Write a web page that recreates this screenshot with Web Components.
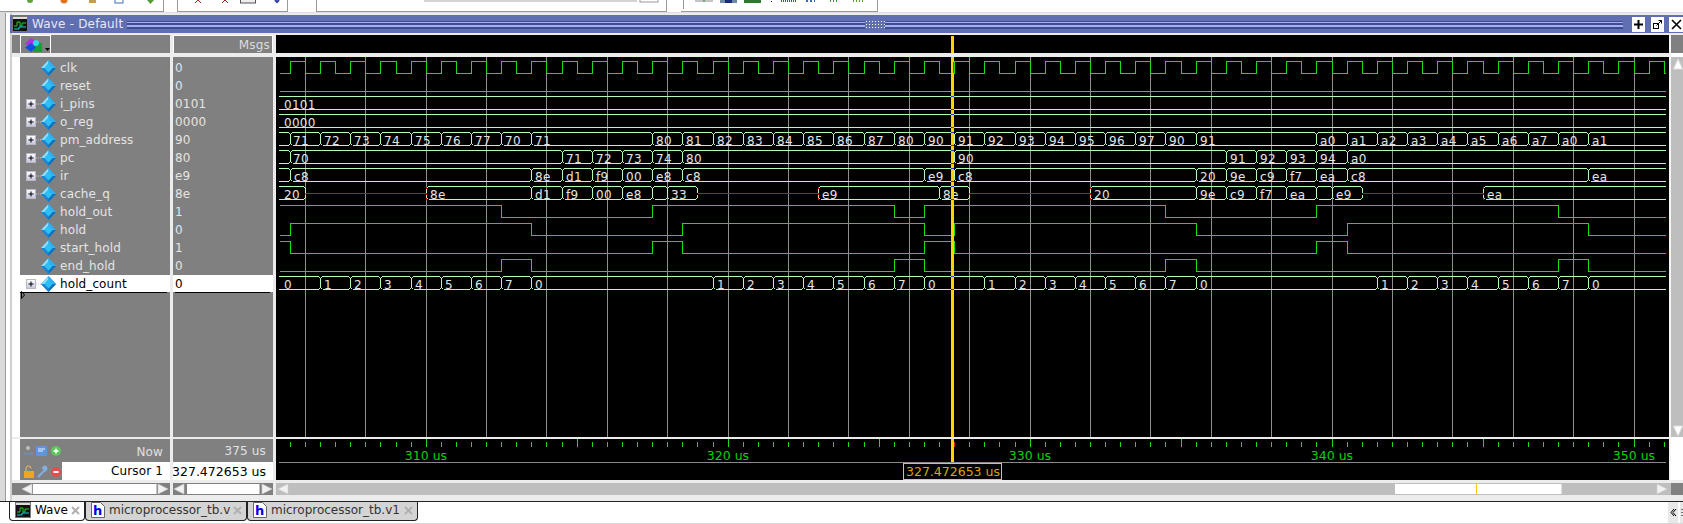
<!DOCTYPE html>
<html><head><meta charset="utf-8"><title>Wave</title>
<style>
html,body{margin:0;padding:0;width:1683px;height:524px;overflow:hidden;background:#fff;font:12px "DejaVu Sans",sans-serif}
</style></head><body>
<wave-app>
  <tool-strip></tool-strip>
  <wave-window>
    <title-bar slot="title">Wave - Default</title-bar>
    <name-head slot="namehead"></name-head>
    <value-head slot="valuehead">Msgs</value-head>
    <cursor-head slot="wavehead"></cursor-head>
    <signal-list slot="names">
      <signal-name>clk</signal-name>
      <signal-name>reset</signal-name>
      <signal-name expand>i_pins</signal-name>
      <signal-name expand>o_reg</signal-name>
      <signal-name expand>pm_address</signal-name>
      <signal-name expand>pc</signal-name>
      <signal-name expand>ir</signal-name>
      <signal-name expand>cache_q</signal-name>
      <signal-name>hold_out</signal-name>
      <signal-name>hold</signal-name>
      <signal-name>start_hold</signal-name>
      <signal-name>end_hold</signal-name>
      <signal-name expand selected>hold_count</signal-name>
    </signal-list>
    <value-list slot="values">
      <signal-value>0</signal-value>
      <signal-value>0</signal-value>
      <signal-value>0101</signal-value>
      <signal-value>0000</signal-value>
      <signal-value>90</signal-value>
      <signal-value>80</signal-value>
      <signal-value>e9</signal-value>
      <signal-value>8e</signal-value>
      <signal-value>1</signal-value>
      <signal-value>0</signal-value>
      <signal-value>1</signal-value>
      <signal-value>0</signal-value>
      <signal-value selected>0</signal-value>
    </value-list>
    <wave-body slot="waves"></wave-body>
    <v-scroll slot="vscroll"></v-scroll>
    <now-names slot="nownames"></now-names>
    <now-values slot="nowvalues"></now-values>
    <time-scale slot="scale"></time-scale>
    <h-scroll slot="s1" thumb="33,156.5" left="22" right="158" origin="12" bg="#808080"></h-scroll>
    <h-scroll slot="s2" thumb="187,259.5" left="174" right="262" origin="173" bg="#808080"></h-scroll>
    <h-scroll slot="s3" thumb="1395,1561.5" left="278" right="1657" origin="276" bg="#bebebe" mark="1476" tail="1671"></h-scroll>
  </wave-window>
  <tab-strip>
    <tab-item active icon="wave" w="76">Wave</tab-item>
    <tab-item icon="file" w="162">microprocessor_tb.v</tab-item>
    <tab-item icon="file" w="171">microprocessor_tb.v1</tab-item>
  </tab-strip>
</wave-app>
<script>
const X=k=>Math.round(425.7+15.0975*k);
const CUR=951;
function def(name,css,html,init){
  customElements.define(name,class extends HTMLElement{
    constructor(){super();this.attachShadow({mode:'open'});}
    connectedCallback(){
      const h=typeof html==='function'?html(this):html;
      this.shadowRoot.innerHTML='<style>'+css+'</style>'+h;
      if(init)init(this);
    }
  });
}
const wwaveIcon=`<svg width="16" height="16" viewBox="0 0 16 16"><rect x=".5" y=".5" width="15" height="15" fill="#111" stroke="#777"/><rect x="1" y="1" width="14" height="2" fill="#ddd"/><path d="M2 10h3V6h3v4h2V7h4" fill="none" stroke="#1fd11f"/><path d="M2 13h5v-2h7" fill="none" stroke="#19c8d8"/></svg>`;

def('wave-app',':host{display:flex;flex-direction:column;width:1683px;height:524px;overflow:hidden}','<slot></slot>');

def('tool-strip',`:host{display:flex;height:13px;flex:none;background:#fff;box-sizing:border-box;border-bottom:1px solid #dcdcdc}
.b{height:12px;box-sizing:border-box;border-right:1px solid #9a9a9a;border-bottom:1px solid #9a9a9a;background:#fff;flex:none;overflow:hidden;display:block}
svg{display:block}`,`
<svg class="b" style="width:164px" width="164" height="12">
 <circle cx="30" cy="0" r="3" fill="#63a03c"/><circle cx="64" cy="0" r="3.5" fill="#e8701c"/><rect x="89" y="-3" width="7" height="6" fill="#c89a50"/><rect x="115" y="-3" width="8" height="6" fill="#fff" stroke="#3a70c0"/><path d="M147 0h7l-3.500 4z" fill="#4ca02c"/></svg>
<svg class="b" style="width:111px;margin-left:13px;border-left:1px solid #9a9a9a" width="111" height="12">
 <path d="M17 3l3-3 3 3M44 3l3-3 3 3" stroke="#a02020" fill="none"/><rect x="62.500" y="-2" width="15" height="5" fill="#eee" stroke="#555"/><path d="M97 0l2 2 2-2" fill="none" stroke="#3040a0" stroke-width="2"/></svg>
<svg class="b" style="width:351px;margin-left:28px;border-left:1px solid #9a9a9a" width="351" height="12">
 <rect x="107" y="0" width="213" height="2" fill="#d4d4d4"/><rect x="323" y="-2" width="18" height="4" fill="#fff" stroke="#999"/></svg>
<svg class="b" style="width:197px;margin-left:14px" width="197" height="12">
 <path d="M2.500 0v9" stroke="#999"/>
 <path d="M14 1h18" stroke="#888"/><path d="M23 0v2" stroke="#2a8a2a"/><rect x="39" y="0" width="17" height="3" fill="#7088a8"/><rect x="44" y="0" width="7" height="3" fill="#1a2a80"/><rect x="63" y="0" width="17" height="3" fill="#2a7a2a"/>
 <rect x="90" y="1" width="1" height="1" fill="#222"/><path d="M100 1h16" stroke="#3a4ab0" stroke-dasharray="1 1" stroke-width="2"/><path d="M125 1h9" stroke="#3a6ab0" stroke-dasharray="2 2" stroke-width="2"/><path d="M149 1h8" stroke="#3a9a3a" stroke-dasharray="1 2" stroke-width="2"/><path d="M172 1h10" stroke="#5a9a3a" stroke-dasharray="1 2" stroke-width="2"/></svg>`);

def('wave-window',`:host{display:grid;flex:none;box-sizing:border-box;width:1683px;background:#ececec;
 padding-left:12px;padding-top:2px;
 grid-template-columns:158px 3px 100px 3px 1393px 14px;
 grid-template-rows:18px 2px 18px 4px 380px 2px 41px 3px 12px 6px;
 background-image:linear-gradient(90deg,#d9d9d9 0 5px,#9a9a9a 5px 6px,#fff 6px 10px,#cfcfcf 10px 12px,transparent 12px)}
::slotted([slot=title]){grid-column:1/-1;grid-row:1;margin-left:-2px}
::slotted([slot=namehead]){grid-column:1;grid-row:3}
::slotted([slot=valuehead]){grid-column:3;grid-row:3}
::slotted([slot=wavehead]){grid-column:5;grid-row:3}
::slotted([slot=names]){grid-column:1;grid-row:5}
::slotted([slot=values]){grid-column:3;grid-row:5}
::slotted([slot=waves]){grid-column:5;grid-row:5}
::slotted([slot=vscroll]){grid-column:6;grid-row:3/8}
::slotted([slot=nownames]){grid-column:1;grid-row:7}
::slotted([slot=nowvalues]){grid-column:3;grid-row:7}
::slotted([slot=scale]){grid-column:5;grid-row:7}
::slotted([slot=s1]){grid-column:1;grid-row:9}
::slotted([slot=s2]){grid-column:3;grid-row:9}
::slotted([slot=s3]){grid-column:5/7;grid-row:9}`,
`<slot name="title"></slot><slot name="namehead"></slot><slot name="valuehead"></slot><slot name="wavehead"></slot><slot name="names"></slot><slot name="values"></slot><slot name="waves"></slot><slot name="vscroll"></slot><slot name="nownames"></slot><slot name="nowvalues"></slot><slot name="scale"></slot><slot name="s1"></slot><slot name="s2"></slot><slot name="s3"></slot>`);

def('title-bar',`:host{display:flex;align-items:center;height:18px;background:#5f6fb1;color:#e6e8f6;font:12px "DejaVu Sans",sans-serif;letter-spacing:.18px;position:relative}
.ic{margin:0 4px 0 2px;flex:none;display:flex}
.t{flex:none;white-space:nowrap;width:95px}
.grip{flex:1;height:8px;margin-top:1px;background:linear-gradient(#3e4d92 0 1px,#a7aff0 1px 2px,#3e4d92 2px 4px,#a7aff0 4px 6px,#3e4d92 6px 8px);display:flex;justify-content:center;align-items:center}
.dots{width:20px;height:10px;background:#5f6fb1 radial-gradient(circle,#fff 0 .7px,transparent .8px) 0 0/3px 3px}
.btns{display:flex;flex:none;margin-right:0;margin-left:4px}
.btn{width:13px;height:15px;background:#fff;border:0;box-sizing:border-box;display:flex;align-items:center;justify-content:center;margin-left:5px}
.btn svg{display:block}`,
`<span class="ic">${wwaveIcon}</span><span class="t"><slot></slot></span><span class="grip"><span class="dots"></span></span>
<span class="btns"><span class="btn"><svg width="11" height="11"><path d="M5.500 1v9M1 5.500h9" stroke="#000" stroke-width="2"/></svg></span><span class="btn" style="margin-left:6px"><svg width="11" height="11"><rect x="1.500" y="4.500" width="5" height="5" fill="none" stroke="#000"/><path d="M4.500 6.500L9.500 1.500M6.500 1.500h3v3" fill="none" stroke="#000"/></svg></span><span class="btn" style="width:14px"><svg width="11" height="11"><path d="M1 1l9 9M10 1l-9 9" stroke="#000" stroke-width="1.600"/></svg></span></span>`);

def('name-head',`:host{display:block;background:#808080;border-left:8px solid #808080;box-sizing:border-box;height:18px}
.b{display:block;width:31px;height:18px;box-sizing:border-box;border:1px solid #fff;border-bottom:0}
svg{display:block}`,
`<span class="b"><svg width="29" height="17"><path d="M4 8l6-6 7 4-5 5z" fill="#b030e0"/><rect x="12" y="7" width="9" height="9" fill="#18a038"/><path d="M10 7l5 4.500-5 4.500-6-4.500z" fill="#1050e0"/><circle cx="15" cy="7" r="3" fill="#30d8f0"/><path d="M24 12h5l-2.500 3z" fill="#000"/></svg></span>`);

def('value-head',`:host{display:flex;justify-content:flex-end;align-items:center;background:#808080;height:18px;box-sizing:border-box;border:1px solid #fff;border-bottom:0;padding:0 2px 0 0;color:#dcdcdc;font:12px "DejaVu Sans",sans-serif;letter-spacing:.2px}`,'<slot></slot>');

def('cursor-head',`:host{display:block;background:#000;height:18px;position:relative}
i{position:absolute;left:${CUR-276}px;top:1px;bottom:0;width:3px;background:#ffd400}`,'<i></i>');

def('signal-list',`:host{display:block;background:#808080;border-left:8px solid #fff;box-sizing:border-box;height:380px;padding-top:1px;position:relative}
.ins{height:1px;background:#000;margin:0 3px 0 0}
svg{position:absolute;left:1px;top:234px}`,
`<slot></slot><div class="ins"></div><svg width="5" height="9"><path d="M.5.500l3 3.500-3 3.500z" fill="none" stroke="#000"/></svg>`);
def('value-list',`:host{display:block;background:#808080;height:380px;padding-top:1px;box-sizing:border-box}
.ins{height:1px;background:#000;margin:0 3px 0 2px}`,`<slot></slot><div class="ins"></div>`);

const diamond=`<svg width="15" height="16" viewBox="0 0 15 16" style="display:block"><path d="M7.500 0L15 8l-7.500 8L0 8z" fill="#1f8fd8"/><path d="M7.500 0L0 8l3.500 0 4-4.500z" fill="#8be0ff"/><path d="M7.500 0L15 8l-3.500 0-4-4.500z" fill="#35b0ee"/><path d="M0 8l7.500 8v-3.500L3.500 8z" fill="#1c86d2"/><path d="M15 8l-7.500 8v-3.500l4-4.500z" fill="#1270bc"/><path d="M7.500 3.500l4 4.500-4 4.500-4-4.500z" fill="#2cc0f8"/></svg>`;
const plus=`<svg width="15" height="16" viewBox="0 0 15 16" style="display:block"><defs><linearGradient id="g" x1="0" y1="0" x2="0" y2="1"><stop offset="0" stop-color="#fff"/><stop offset="1" stop-color="#c4c4dc"/></linearGradient></defs><rect x=".5" y="3.500" width="9" height="9" fill="url(#g)" stroke="#b8b8c8"/><path d="M2.500 8h5M5 5.500v5" stroke="#000" stroke-width="1"/><path d="M10 8h5" stroke="#c8c8c8" stroke-dasharray="1 1"/></svg>`;
def('signal-name',`:host{display:flex;align-items:center;height:18px;box-sizing:border-box;padding:2px 0 0 6px;color:#e4e4e4;font:12px "DejaVu Sans",sans-serif;letter-spacing:.1px;white-space:nowrap}
:host([selected]){color:#000;background:linear-gradient(#808080 0 1px,#fff 1px)}
.p{width:15px;height:16px;flex:none}
.d{flex:none;margin-right:4px}`,
e=>`<span class="p">${e.hasAttribute('expand')?plus:''}</span><span class="d">${diamond}</span><slot></slot>`);
def('signal-value',`:host{display:flex;align-items:center;height:18px;box-sizing:border-box;padding:2px 0 0 2px;color:#e4e4e4;font:12px "DejaVu Sans",sans-serif;letter-spacing:.2px}
:host([selected]){color:#000;background:linear-gradient(#808080 0 1px,#fff 1px)}`,'<slot></slot>');

/* ---------- waveforms ---------- */
function buildWaves(){
  const G='#14e014',B='#b4fbb4',R='#f00000',END=1666,ST=280;
  let grid='',g='',b='',r='',t='',blue='';
  for(let k=-8;k<=80;k+=4){const x=X(k);grid+=`M${x+.5} 57V437`;}
  const top=i=>58+18*i;
  const bit=(i,startHigh,edges)=>{
    const hi=top(i)+3.5,lo=top(i)+15.5;let lvl=startHigh;let d=`M${ST} ${lvl?hi:lo}`;
    edges.forEach(k=>{const x=X(k)+.5;d+=`H${x}`;lvl=!lvl;d+=`V${lvl?hi:lo}`;});
    d+=`H${END}`;g+=d;
  };
  const clkE=[];for(let k=-9;k<=82;k++)clkE.push(k);
  bit(0,false,clkE);
  bit(1,false,[]);
  bit(8,true,[5,15,31,33,49,59,75]);
  bit(9,false,[-9,7,17,33,35,51,61,77]);
  bit(10,true,[-9,15,17,33,35,59,61]);
  bit(11,false,[5,7,31,33,49,51,75,77]);
  const bus=(i,segs)=>{
    const T=top(i)+2.5,Bt=T+13,M=T+7;
    segs.forEach((s,n)=>{
      const first=n===0,last=n===segs.length-1;
      const x0=first?279:X(s[0]);const x1=last?END:X(segs[n+1][0]);
      const red=s[1]===null;
      if(red){r+=`M${x0+1} ${M}H${x1+1}`;}
      else{
        const a=first?x0:x0+2.5,c=last?x1:x1-1.5;
        b+=`M${a} ${T}H${c}M${a} ${Bt}H${c}`;
        if(s[1])t+=`<text x="${first?284:x0+4+(s[2]||0)}" y="${top(i)+15}">${s[1]}</text>`;
      }
      if(!first){
        const x=x0+.5,prevRed=segs[n-1][1]===null;
        if(!prevRed)b+=`M${x-2} ${T}L${x} ${T+2}V${prevRed?M:(red?M-1:Bt-2)}`+(red?`M${x-2} ${Bt}L${x} ${Bt-2}V${M+1}`:`L${x-2} ${Bt}`);
        if(!red){
          if(prevRed){b+=`M${x} ${T+2}V${Bt-2}`;r+=`M${x} ${T}V${T+2}M${x} ${Bt-2}V${Bt}M${x} ${M-1}V${M+1}`;}
          b+=`M${x+2} ${T}L${x} ${T+2}M${x+2} ${Bt}L${x} ${Bt-2}`;
        }
      }
    });
  };
  bus(2,[[0,'0101']]);
  bus(3,[[0,'0000']]);
  const seq=(k,labels,offs)=>labels.map((l,n)=>[k+2*n,l,offs&&offs[n]||0]);
  bus(4,[[0,''],[-9,'71',-1],...seq(-7,['72','73','74','75','76','77','70','71']),
     ...seq(15,['80','81','82','83','84','85','86','87','80','90','91','92','93','94','95','96','97','90','91']),
     ...seq(59,['a0','a1','a2','a3','a4','a5','a6','a7','a0','a1'])]);
  bus(5,[[0,''],[-9,'70',-1],...seq(9,['71','72','73','74','80']),[35,'90'],...seq(53,['91','92','93','94','a0'])]);
  bus(6,[[0,''],[-9,'c8',0],...seq(7,['8e','d1','f9','00','e8','c8']),[33,'e9'],[35,'c8'],...seq(51,['20','9e','c9','f7','ea','c8']),[77,'ea']]);
  bus(7,[[0,'20'],[-8,null],[0,'8e'],[7,'d1'],[9,'f9'],[11,'00'],[13,'e8'],[15,''],[16,'33'],[18,null],[26,'e9'],[34,'8e'],[36,null],[44,'20'],[51,'9e'],[53,'c9'],[55,'f7'],[57,'ea'],[59,''],[60,'e9'],[62,null],[70,'ea']]);
  bus(12,[[0,'0'],...seq(-7,['1','2','3','4','5','6','7','0']),...seq(19,['1','2','3','4','5','6','7','0']),...seq(37,['1','2','3','4','5','6','7','0']),...seq(63,['1','2','3','4','5','6','7','0'])]);
  [2,3,4,5,6,7,12].forEach(i=>{blue+=`M${CUR} ${top(i)+2.5}h3M${CUR} ${top(i)+15.5}h3`;});
  return `<svg width="1393" height="380" viewBox="276 57 1393 380" style="display:block" shape-rendering="crispEdges">
  <path d="${grid}" stroke="#8f8f8f" fill="none"/>
  <path d="${g}" stroke="${G}" fill="none"/>
  <path d="${b}" stroke="${B}" fill="none"/>
  <path d="${r}" stroke="${R}" fill="none"/>
  <g font-family="DejaVu Sans" font-size="12" fill="#e4e4e4" letter-spacing=".3">${t}</g>
  <rect x="${CUR}" y="57" width="3" height="380" fill="#ffd400"/>
  <path d="${blue}" stroke="#3030d0" fill="none"/>
  <path d="M${CUR+2.5} 62V73" stroke="#e02020" fill="none"/>
  </svg>`;
}
def('wave-body',':host{display:block;background:#000;height:380px;overflow:hidden}',()=>buildWaves());

def('v-scroll',`:host{display:block;box-sizing:border-box;border-left:2px solid #f4f4f4;height:445px;background:#fff;position:relative}
.h{height:18px;background:#808080}
.t{margin-top:4px;height:380px;background:#bebebe;position:relative}
svg{display:block;margin-left:2px}
.up{position:absolute;top:1px;left:0}.dn{position:absolute;bottom:0;left:0}`,
`<div class="h"></div><div class="t"><svg class="up" width="10" height="12"><path d="M5 1l4.500 10H.5z" fill="#fff" stroke="#ddd"/></svg><svg class="dn" width="10" height="12"><path d="M5 11l4.500-10H.5z" fill="#fff" stroke="#ddd"/></svg></div>`);

def('now-names',`:host{display:grid;grid-template-rows:23px 18px;height:41px;background:#808080;border-left:8px solid #fff;box-sizing:border-box;font:12px "DejaVu Sans",sans-serif;letter-spacing:.15px}
.r{display:flex;align-items:center}
.ic{display:flex;width:42px;flex:none;padding-left:3px;box-sizing:border-box;gap:3px}
.l{flex:1;text-align:right;padding-right:7px;line-height:19px;height:18px;color:#e0e0e0}
.w{background:#fff;color:#000;height:18px}`,
`<div class="r"><span class="ic"><svg width="39" height="12"><path d="M1 9h9M1 9l2-2M10 9l-2-2" stroke="#6a90c8" fill="none"/><circle cx="5" cy="3" r="2" fill="#bcbcbc"/><rect x="13" y="1" width="11" height="10" rx="1" fill="#5e96dc"/><path d="M15 4h7M15 6h5" stroke="#e8f0ff"/><circle cx="33" cy="6" r="5" fill="#5ec85e"/><path d="M30.500 6h5M33 3.500v5" stroke="#fff" stroke-width="1.500"/></svg></span><span class="l" style="line-height:20px">Now</span></div>
<div class="r"><span class="ic"><svg width="39" height="13"><path d="M3 6V3.500a2.500 2.500 0 0 1 5 0" fill="none" stroke="#e8c070"/><rect x="1" y="6" width="10" height="7" fill="#e8a820"/><path d="M15 12l6-6M21 6a2.500 2.500 0 0 0 2-4l-2 2-1-1 2-2" fill="none" stroke="#82aee0" stroke-width="2"/><circle cx="33" cy="7" r="5" fill="#e05050"/><path d="M30.500 7h5" stroke="#fff" stroke-width="2"/></svg></span><span class="l w">Cursor 1</span></div>`);

def('now-values',`:host{display:grid;grid-template-rows:23px 18px;height:41px;background:#808080;font:12px "DejaVu Sans",sans-serif;letter-spacing:.15px;text-align:right;overflow:hidden}
div{padding-right:7px;line-height:24px;color:#e0e0e0;white-space:nowrap;overflow:hidden}
.w{background:#fff;color:#000;line-height:19px;font-size:12.500px;letter-spacing:0;direction:rtl}`,
`<div>375 us</div><div class="w"><bdi>327.472653 us</bdi></div>`);

def('time-scale',`:host{display:block;background:#000;height:41px;overflow:hidden}
svg{display:block}`,()=>{
  let d='',maj='';
  for(let k=-9;k<=82;k++){const x=X(k)+.5; if(k%10===0)maj+=`M${x} 439V447`;else d+=`M${x} 442V447`;}
  const labs=[0,20,40,60,80].map((k,n)=>`<text x="${X(k)}" y="459.500" text-anchor="middle">${310+n*10} us</text>`).join('');
  return `<svg width="1393" height="41" viewBox="276 439 1393 41">
  <g shape-rendering="crispEdges"><path d="${d}${maj}" stroke="#14e014" fill="none"/><path d="M279 462.500H1666" stroke="#8a8a8a"/>
  <rect x="${CUR}" y="439" width="3" height="23" fill="#ffd400"/><path d="M${CUR+3.5} 442V447" stroke="#e02020"/>
  <rect x="903.500" y="463.500" width="98" height="16" fill="#000" stroke="#ffc800"/></g>
  <g font-family="DejaVu Sans" font-size="12.500" fill="#00d400">${labs}</g>
  <text x="906" y="476" font-family="DejaVu Sans" font-size="12.500" fill="#d8a800">327.472653 us</text></svg>`;
});

def('h-scroll',`:host{display:block;height:12px;overflow:hidden}svg{display:block}`,e=>{
  const o=+e.getAttribute('origin'),[a,z]=e.getAttribute('thumb').split(',').map(Number),l=+e.getAttribute('left')-o,rr=+e.getAttribute('right')-o,m=e.getAttribute('mark'),tl=e.getAttribute('tail');
  return `<svg width="100%" height="12" style="background:${e.getAttribute('bg')}">
  <path d="M${l} 6l10-5v10z" fill="#f2f2f2" stroke="#cfcfcf" stroke-width=".6"/><path d="M${rr+10} 6l-10-5v10z" fill="#f2f2f2" stroke="#cfcfcf" stroke-width=".6"/>
  <rect x="${a-o}" y="1" width="${z-a}" height="10" fill="#fff"/>${m?`<rect x="${m-o}" y="1" width="1" height="10" fill="#ffc800"/>`:''}${tl?`<rect x="${tl-o}" y="0" width="12" height="12" fill="#808080"/>`:''}</svg>`;
});

def('tab-strip',`:host{display:flex;height:23px;flex:none;box-sizing:border-box;border-top:1px solid #222;border-bottom:1px solid #d8d8d8;background:#fff;padding-left:9px;position:relative;overflow:hidden}
.end{position:absolute;right:0;top:0;height:21px;display:flex;background:#fff}
.end svg{display:block}`,
`<slot></slot><div class="end"><svg width="15" height="21"><rect x="0" y="0" width="10" height="21" fill="#e8e8e8"/><path d="M6 7L3 10.500 6 14M8 7L5 10.500 8 14" fill="none" stroke="#000"/><rect x="12" y="0" width="3" height="21" fill="#e8e8e8"/><path d="M14 7v1M14 10v1M14 13v1" stroke="#000"/></svg></div>`);
const fileIcon=`<svg width="14" height="16" viewBox="0 0 14 16"><path d="M.5.500h9l4 4v11H.5z" fill="#fff" stroke="#666"/><text x="2" y="13" font-family="DejaVu Sans" font-weight="bold" font-size="13" fill="#0000e0">h</text></svg>`;
def('tab-item',`:host{display:flex;align-items:center;box-sizing:border-box;height:19px;border:1px solid #222;border-top:0;border-radius:0 0 4px 4px;background:#d4d4d4;color:#333;font:12px "DejaVu Sans",sans-serif;white-space:nowrap;padding:0 0 2px 5px}
:host([active]){background:#fff;color:#000}
.ic{display:flex;margin-right:4px;flex:none}
.t{flex:1}
.x{flex:none;margin-right:4px;display:flex}`,
e=>`<span class="ic">${e.getAttribute('icon')==='wave'?wwaveIcon:fileIcon}</span><span class="t"><slot></slot></span><span class="x"><svg width="9" height="9"><path d="M1 1l7 7M8 1l-7 7" stroke="#b0b0b0" stroke-width="2"/></svg></span>`,
e=>{e.style.width=e.getAttribute('w')+'px';e.style.flex='none';});
</script>
</body></html>
